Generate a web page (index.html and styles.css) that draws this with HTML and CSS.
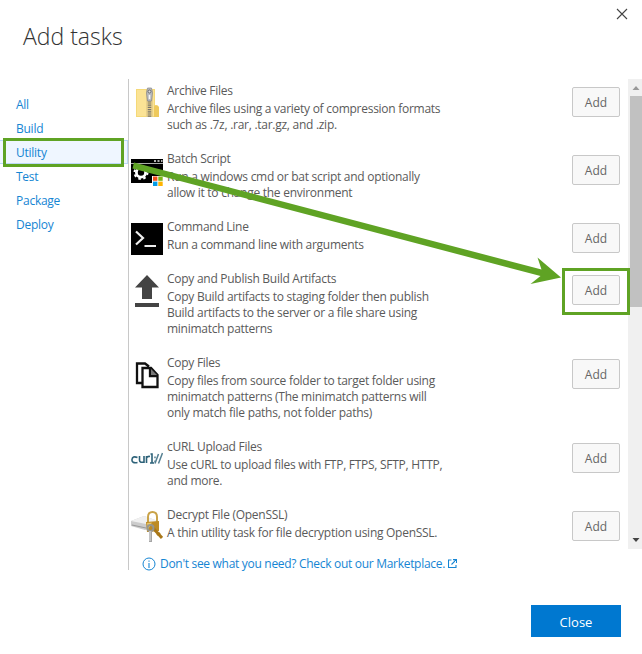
FILE: index.html
```
<!DOCTYPE html>
<html lang="en">
<head>
<meta charset="utf-8">
<title>Add tasks</title>
<link rel="stylesheet" href="styles.css">
</head>
<body>
<div class="dialog">
  <header class="header">
    <h1>Add tasks</h1>
    <svg class="dismiss" width="12" height="12" viewBox="0 0 12 12"><path d="M1 1l10 10M11 1L1 11" stroke="#444" stroke-width="1.1" fill="none"/></svg>
  </header>
  <main class="content">
    <nav class="nav">
      <a>All</a><a>Build</a><a class="selected">Utility</a><a>Test</a><a>Package</a><a>Deploy</a>
    </nav>
    <section class="panel">
      <div class="scroller">
        <div class="tasks">
          <article class="task">
            <svg class="icon" viewBox="0 0 32 32"><path d="M5 2h19v28H5z" fill="#f5d978"/><path d="M6 3h17v26H6z" fill="#fbe395"/><path d="M23 20q0-2 2-2t3 2v10h-5z" fill="#eec95c"/><path d="M15 3h7v27h-7z" fill="#e8d08a"/><path d="M18.500 11v19" stroke="#77746b" stroke-width="3.500" stroke-dasharray="1.200 1"/><path d="M16.500 1h4l1 5-1 8h-4l-1-8z" fill="#b9bbc0" stroke="#85878b" stroke-width=".7"/><circle cx="18.500" cy="4.500" r="1.500" fill="#ddd" stroke="#6b6c70"/><path d="M18.500 8v4" stroke="#f5f5f5" stroke-width="1.500"/></svg>
            <div class="text"><h2>Archive Files</h2><p>Archive files using a variety of compression formats<br>such as .7z, .rar, .tar.gz, and .zip.</p></div>
            <button>Add</button>
          </article>
          <article class="task">
            <svg class="icon" viewBox="0 0 32 32"><path d="M0 4h32v24H0z"/><path d="M0 8.500h32" stroke="#aaa"/><path d="M23 6h2M26.500 6h2M30 6h1.500" stroke="#eee" stroke-width="1.500"/><circle cx="10" cy="17.500" r="4.600" fill="none" stroke="#fff" stroke-width="2.800"/><circle cx="10" cy="17.500" r="6.500" fill="none" stroke="#fff" stroke-width="2" stroke-dasharray="2.500 2.600"/><path d="M21 21h11v10H21z" fill="#fff"/><path d="M22 21.500h4.400v4.300H22z" fill="#f4511e"/><path d="M27.300 21.500h4.400v4.300h-4.400z" fill="#7cb518"/><path d="M22 26.600h4.400V31H22z" fill="#039be5"/><path d="M27.300 26.600h4.400V31h-4.400z" fill="#ffb300"/></svg>
            <div class="text"><h2>Batch Script</h2><p>Run a windows cmd or bat script and optionally<br>allow it to change the environment</p></div>
            <button>Add</button>
          </article>
          <article class="task">
            <svg class="icon" viewBox="0 0 32 32"><path d="M0 0h32v32H0z"/><path d="M5 8.500l7 6.500-7 6.500M13.500 23H25" fill="none" stroke="#eee" stroke-width="2.200"/></svg>
            <div class="text"><h2>Command Line</h2><p>Run a command line with arguments</p></div>
            <button>Add</button>
          </article>
          <article class="task">
            <svg class="icon" viewBox="0 0 32 32"><path d="M16 0l12 12.500h-7V24H11V12.500H4zM4 28h24v4H4z" fill="#444"/></svg>
            <div class="text"><h2>Copy and Publish Build Artifacts</h2><p>Copy Build artifacts to staging folder then publish<br>Build artifacts to the server or a file share using<br>minimatch patterns</p></div>
            <button>Add</button>
          </article>
          <article class="task">
            <svg class="icon" viewBox="0 0 32 32"><path d="M11 24H6V4.500h8l4 3M11.500 9H20l6.500 7v12h-15zM19 9v8h8" fill="none" stroke="#111" stroke-width="2.300"/><path d="M20 10l6 6h-6z" fill="#777"/></svg>
            <div class="text"><h2>Copy Files</h2><p>Copy files from source folder to target folder using<br>minimatch patterns (The minimatch patterns will<br>only match file paths, not folder paths)</p></div>
            <button>Add</button>
          </article>
          <article class="task">
            <svg class="icon" viewBox="0 0 32 32"><g fill="none" stroke="#2d6279" stroke-width="1.600"><path d="M6.500 14.500Q1.500 12.500 1 16.500t5.500 3M8.500 13v4q0 3 4 2M13 13v7M15.500 20v-7M15.500 15q1-2 3.500-1.500M19.500 11h1.500v9M19 20h4"/><path d="M24 13.500v1.700M24 17.500v1.700M24 20.500l3.500-9.500M27.500 20.500L31.500 10" stroke="#557f91" stroke-width="1.500"/></g></svg>
            <div class="text"><h2>cURL Upload Files</h2><p>Use cURL to upload files with FTP, FTPS, SFTP, HTTP,<br>and more.</p></div>
            <button>Add</button>
          </article>
          <article class="task">
            <svg class="icon" viewBox="0 0 32 32"><path d="M0 10l13-5 14 5v5l-13 4L0 15z" fill="#ccc"/><path d="M0 10l13-5 14 5-12 3z" fill="#f0f0f0"/><path d="M1 14l14 3" stroke="#999"/><path d="M17 12V6q0-5 4.500-5T26 6v7" fill="none" stroke="#c9a349" stroke-width="2"/><path d="M15 11l13-1v10l-12 1z" fill="#bd8b25"/><path d="M16 12l5-.5-4 7z" fill="#e7c568"/><path d="M22 17l9 10" stroke="#a97718" stroke-width="3"/><path d="M26 24l3-2" stroke="#a97718" stroke-width="2"/><circle cx="19.500" cy="17" r="3" fill="none" stroke="#96968f" stroke-width="2"/><path d="M19.500 20v11" stroke="#a5a5a5" stroke-width="3"/><path d="M19 20v10" stroke="#e2e2e2"/></svg>
            <div class="text"><h2>Decrypt File (OpenSSL)</h2><p>A thin utility task for file decryption using OpenSSL.</p></div>
            <button>Add</button>
          </article>
        </div>
        <div class="scrollbar">
          <svg width="14" height="17" viewBox="0 0 14 17"><path d="M4.500 11L8 7l3.500 4z" fill="#999"/></svg>
          <div class="thumb"></div>
          <svg class="down" width="14" height="17" viewBox="0 0 14 17"><path d="M4.500 6L8 10l3.500-4z" fill="#444"/></svg>
        </div>
      </div>
      <a class="market">
        <svg width="14" height="14" viewBox="0 0 14 14"><circle cx="7" cy="7" r="6" fill="none" stroke="#1585d3"/><path d="M7 6v5M7 3.500v1.300" stroke="#1585d3" stroke-width="1.100"/></svg>
        <span>Don't see what you need? Check out our Marketplace.</span>
        <svg class="external" width="9" height="9" viewBox="0 0 9 9"><path d="M3.500 1H.5v7.500H8V6M5 .6h3.500V4M8.300.7L3.500 5.500" fill="none" stroke="#1585d3" stroke-width="1.100"/></svg>
      </a>
    </section>
  </main>
  <footer class="footer"><button class="close">Close</button></footer>
  <div class="mark mark-nav"></div>
  <div class="mark mark-add"></div>
  <svg class="arrow" width="642" height="654" viewBox="0 0 642 654"><path d="M134 162.500L541.500 269.500 537.500 257.500 561 277.500 530.500 284 540.500 276 132.500 168.500z" fill="#5fa324"/></svg>
</div>
</body>
</html>
```
FILE: styles.css
```
* { box-sizing: border-box; }
body {
  margin: 0;
  background: #fff;
  color: #5a5a5a;
  font: 12px/16px "Open Sans", "Noto Sans", sans-serif;
}
.dialog {
  position: relative;
  width: 642px;
  height: 654px;
  overflow: hidden;
}
.header {
  display: flex;
  justify-content: space-between;
  height: 79px;
  padding: 8px 14px 0 23px;
}
h1 {
  margin: 12px 0 0;
  color: #333;
  font-size: 23px;
  font-weight: 300;
  line-height: 32px;
  letter-spacing: 0;
}
.content { display: flex; height: 491px; }
.nav {
  display: flex;
  flex-direction: column;
  width: 128px;
  padding-top: 13px;
  color: #1585d3;
}
.nav a {
  height: 24px;
  padding-left: 16px;
  border: solid transparent;
  border-width: 1px 1px 1px 0;
  line-height: 24px;
  letter-spacing: -0.25px;
}
.nav .selected { border-color: #bcd9f7; background: #eff6ff; }
.panel { width: 514px; border-left: 1px solid #c8c8c8; }
.scroller { display: flex; height: 470px; overflow: hidden; }
.tasks { width: 499px; padding-top: 1px; }
.task {
  display: flex;
  align-items: flex-start;
  padding: 0 8px 15px 2px;
}
.icon { flex: none; width: 32px; height: 32px; margin: 7px 0 -7px; }
.text { flex: 1; padding-left: 4px; white-space: nowrap; letter-spacing: -0.27px; }
h2 { margin: 0 0 -1px; font-size: 12px; font-weight: 400; line-height: 22px; }
p { margin: 0; }
button {
  width: 48px;
  height: 30px;
  margin: 7px 0 -7px;
  padding: 1px 0 0;
  border: 1px solid #c8c8c8;
  border-radius: 2px;
  background: #f8f8f8;
  color: #666;
  font: inherit;
}
.scrollbar {
  display: flex;
  flex-direction: column;
  width: 14px;
  background: #f0f0f0;
}
.thumb { height: 211px; margin-left: 2px; background: #c1c1c1; }
.down { margin-top: auto; }
.market {
  display: flex;
  align-items: center;
  height: 21px;
  padding: 8px 0 0 13px;
  line-height: 14px;
  color: #1585d3;
  letter-spacing: -0.3px;
}
.market span { margin-left: 4px; }
.external { margin-left: 3px; }
.footer { display: flex; justify-content: flex-end; padding: 35px 21px 0 0; }
.close {
  width: 90px;
  height: 32px;
  margin: 0;
  border: 0;
  border-radius: 0;
  background: #0078d0;
  color: #fff;
  font-size: 13px;
}
.mark { position: absolute; border: 3px solid #5fa324; }
.mark-nav { left: 3px; top: 138px; width: 121px; height: 29px; }
.mark-add { left: 562px; top: 268px; width: 68px; height: 47px; }
.arrow { position: absolute; left: 0; top: 0; }
```
